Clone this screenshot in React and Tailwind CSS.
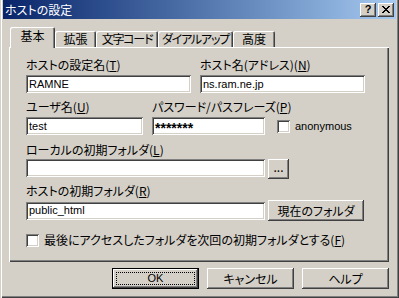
import React from 'react';

const jp = "font-['Noto_Sans_CJK_JP','Liberation_Sans',sans-serif] [font-feature-settings:'palt'] text-[12px]";
const latin = "font-['Liberation_Sans','Noto_Sans_CJK_JP',sans-serif] text-[11px]";
const raised = 'bg-[#d4d0c8] shadow-[inset_-1px_-1px_#404040,inset_1px_1px_#fff,inset_-2px_-2px_#808080]';
const sunken = 'bg-white shadow-[inset_1px_1px_#808080,inset_-1px_-1px_#fff,inset_2px_2px_#404040,inset_-2px_-2px_#d4d0c8]';

function Label({ text, acc, className = '' }) {
  return (
    <div className={`${jp} h-[14px] leading-[14px] text-black whitespace-nowrap ${className}`}>
      {text}(<span className="underline">{acc}</span>)
    </div>
  );
}

function Input({ value, className = '' }) {
  return (
    <div className={`${sunken} ${latin} h-[18px] pl-[3px] flex items-center text-black whitespace-nowrap overflow-hidden ${className}`}>
      {value}
    </div>
  );
}

function Checkbox() {
  return <div className={`${sunken} w-[13px] h-[13px] shrink-0`} />;
}

function Button({ children, className = '' }) {
  return (
    <div className={`${raised} ${jp} flex items-center justify-center text-black whitespace-nowrap ${className}`}>
      {children}
    </div>
  );
}

const tabs = [
  { label: '拡張', w: 'w-[41px]', t: '' },
  { label: '文字コード', w: 'w-[62px]', t: 'tracking-[-1.2px]' },
  { label: 'ダイアルアップ', w: 'w-[75px]', t: 'tracking-[-1.2px]' },
  { label: '高度', w: 'w-[42px]', t: '' },
];

export default function App() {
  return (
    <div className="w-[399px] h-[298px] bg-[#d4d0c8] flex flex-col px-[3px] pb-[3px] overflow-hidden shadow-[inset_1px_0_#d4d0c8,inset_2px_0_#fff,inset_-1px_-1px_#404040,inset_-2px_-2px_#808080]">
      {/* title bar */}
      <div className="h-[19px] shrink-0 flex items-center bg-linear-to-r from-[#0a246a] to-[#a6caf0] pl-[2px] pr-[2px]">
        <div className={`${jp} text-white leading-[14px] flex-1`}>ホストの設定</div>
        <div className="flex gap-[2px]">
          <div className={`${raised} w-[16px] h-[14px] flex items-center justify-center font-['Liberation_Sans',sans-serif] text-[11px] font-bold leading-none text-black`}>?</div>
          <div className={`${raised} w-[16px] h-[14px] flex items-center justify-center`}>
            <svg width="8" height="7" viewBox="0 0 8 7" shapeRendering="crispEdges">
              <path d="M0 0h2v1H0zM6 0h2v1H6zM1 1h2v1H1zM5 1h2v1H5zM2 2h4v1H2zM3 3h2v1H3zM2 4h4v1H2zM1 5h2v1H1zM5 5h2v1H5zM0 6h2v1H0zM6 6h2v1H6z" fill="#000" />
            </svg>
          </div>
        </div>
      </div>

      {/* tabs */}
      <div className="flex items-end pl-[7px] mt-[8px] h-[20px] shrink-0">
        <div className={`relative z-10 -mb-px h-[21px] w-[45px] bg-[#d4d0c8] rounded-t-[2px] shadow-[inset_1px_1px_#fff,inset_-1px_0_#404040,inset_-2px_0_#808080] flex justify-center pt-[2px] ${jp} leading-[14px] text-black`}>
          基本
        </div>
        {tabs.map((t) => (
          <div
            key={t.label}
            className={`h-[16px] ${t.w} ${t.t} bg-[#d4d0c8] rounded-t-[2px] shadow-[inset_1px_1px_#fff,inset_-1px_0_#404040,inset_-2px_0_#808080] flex items-center justify-center ${jp} leading-[14px] text-black whitespace-nowrap`}
          >
            {t.label}
          </div>
        ))}
      </div>

      {/* panel */}
      <div className="ml-[6px] w-[380px] h-[215px] shrink-0 flex flex-col pl-[17px] pt-[11px] shadow-[inset_1px_1px_#fff,inset_-1px_-1px_#404040,inset_-2px_-2px_#808080]">
        <div className="flex gap-[9px]">
          <div className="flex flex-col gap-[3px]">
            <Label text="ホストの設定名" acc="T" />
            <Input value="RAMNE" className="w-[165px]" />
          </div>
          <div className="flex flex-col gap-[3px]">
            <Label text="ホスト名(アドレス)" acc="N" />
            <Input value="ns.ram.ne.jp" className="w-[165px]" />
          </div>
        </div>

        <div className="flex items-end mt-[7px]">
          <div className="flex flex-col gap-[3px] w-[117px]">
            <Label text="ユーザ名" acc="U" />
            <Input value="test" className="w-[117px]" />
          </div>
          <div className="flex flex-col gap-[3px] ml-[9px] w-[113px]">
            <Label text="パスワード/パスフレーズ" acc="P" />
            <div className={`${sunken} h-[18px] w-[113px] pl-[3px] flex items-center font-['Liberation_Sans',sans-serif] text-[14px] font-bold text-black leading-none pt-[4px]`}>
              *******
            </div>
          </div>
          <div className="flex items-center ml-[12px] mb-[1px] h-[16px]">
            <Checkbox />
            <span className={`${latin} text-black ml-[5px]`}>anonymous</span>
          </div>
        </div>

        <Label text="ローカルの初期フォルダ" acc="L" className="mt-[8px]" />
        <div className="flex items-start mt-[2px]">
          <Input value="" className="w-[239px]" />
          <Button className="ml-[3px] w-[21px] h-[20px] font-['Liberation_Sans',sans-serif] text-[11px] pb-[4px]">...</Button>
        </div>

        <Label text="ホストの初期フォルダ" acc="R" className="mt-[5px]" />
        <div className="flex items-center mt-[2px]">
          <Input value="public_html" className="w-[239px]" />
          <Button className="ml-[3px] w-[96px] h-[21px]">現在のフォルダ</Button>
        </div>

        <div className="flex items-center mt-[12px]">
          <Checkbox />
          <span className={`${jp} text-black ml-[5px] leading-[14px] whitespace-nowrap`}>
            最後にアクセスしたフォルダを次回の初期フォルダとする(<span className="underline">F</span>)
          </span>
        </div>
      </div>

      {/* buttons */}
      <div className="flex justify-end gap-[8px] pr-[7px] mt-[6px]">
        <div className="w-[87px] h-[21px] border border-black flex">
          <div className={`${raised} flex-1 flex p-[3px]`}>
            <div className={`flex-1 border border-dotted border-black flex items-center justify-center ${latin} text-black`}>OK</div>
          </div>
        </div>
        <Button className="w-[87px] h-[21px]">キャンセル</Button>
        <Button className="w-[87px] h-[21px]">ヘルプ</Button>
      </div>
    </div>
  );
}
